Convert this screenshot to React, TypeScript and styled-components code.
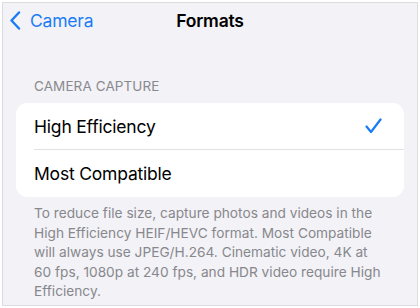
import React from 'react';
import styled, { createGlobalStyle } from 'styled-components';

const GlobalStyle = createGlobalStyle`
  html, body {
    margin: 0;
    padding: 0;
    background: #ffffff;
  }
  body {
    font-family: 'Inter', 'Liberation Sans', sans-serif;
    -webkit-font-smoothing: antialiased;
  }
`;

const Frame = styled.div`
  margin: 2px;
  width: 414px;
  height: 302px;
  border: 1px solid #dcdce0;
  background: #f2f2f7;
  overflow: hidden;
  display: flex;
  flex-direction: column;
`;

const NavBar = styled.div`
  position: relative;
  height: 34px;
  display: flex;
  align-items: center;
  justify-content: center;
`;

const BackButton = styled.div`
  position: absolute;
  left: 6px;
  top: 0;
  height: 100%;
  display: flex;
  align-items: center;
  gap: 9px;
  color: #1a7cf4;
  font-size: 17.5px;
  letter-spacing: -0.2px;
`;

const Title = styled.div`
  font-size: 17.5px;
  font-weight: 600;
  color: #000;
  letter-spacing: -0.2px;
`;

const Section = styled.div`
  padding: 40px 13px 0;
`;

const SectionHeader = styled.div`
  padding: 0 18px 8px;
  font-size: 13.5px;
  color: #8a8a8e;
  letter-spacing: 0.1px;
  line-height: 18px;
`;

const Card = styled.div`
  background: #ffffff;
  border-radius: 11px;
  overflow: hidden;
`;

const Row = styled.div<{ $divider?: boolean }>`
  height: 47px;
  display: flex;
  align-items: center;
  justify-content: space-between;
  margin-left: 18px;
  padding-right: 22px;
  font-size: 17.5px;
  color: #000;
  letter-spacing: -0.2px;
  box-sizing: border-box;
  border-bottom: ${p => (p.$divider ? '1px solid #e2e2e6' : 'none')};
`;

const Footer = styled.div`
  padding: 7px 17px 0 18px;
  font-size: 13.7px;
  line-height: 19.5px;
  color: #88888c;
`;

const Chevron = () => (
  <svg width="12" height="19" viewBox="0 0 12 19" fill="none">
    <path d="M10 1.5 L2.5 9.5 L10 17.5" stroke="#1a7cf4" strokeWidth="2.4" strokeLinecap="round" strokeLinejoin="round" />
  </svg>
);

const Check = () => (
  <svg width="17" height="16" viewBox="0 0 17 16" fill="none">
    <path d="M1.5 8.5 L6 14 L15.5 1.5" stroke="#1a7cf4" strokeWidth="2.2" strokeLinecap="round" strokeLinejoin="round" />
  </svg>
);

const App: React.FC = () => {
  return (
    <>
      <GlobalStyle />
      <Frame>
        <NavBar>
          <BackButton>
            <Chevron />
            <span>Camera</span>
          </BackButton>
          <Title>Formats</Title>
        </NavBar>
        <Section>
          <SectionHeader>CAMERA CAPTURE</SectionHeader>
          <Card>
            <Row $divider>
              <span>High Efficiency</span>
              <Check />
            </Row>
            <Row>
              <span>Most Compatible</span>
            </Row>
          </Card>
          <Footer>
            To reduce file size, capture photos and videos in the High Efficiency HEIF/HEVC format. Most Compatible will always use JPEG/H.264. Cinematic video, 4K at 60 fps, 1080p at 240 fps, and HDR video require High Efficiency.
          </Footer>
        </Section>
      </Frame>
    </>
  );
};

export default App;
